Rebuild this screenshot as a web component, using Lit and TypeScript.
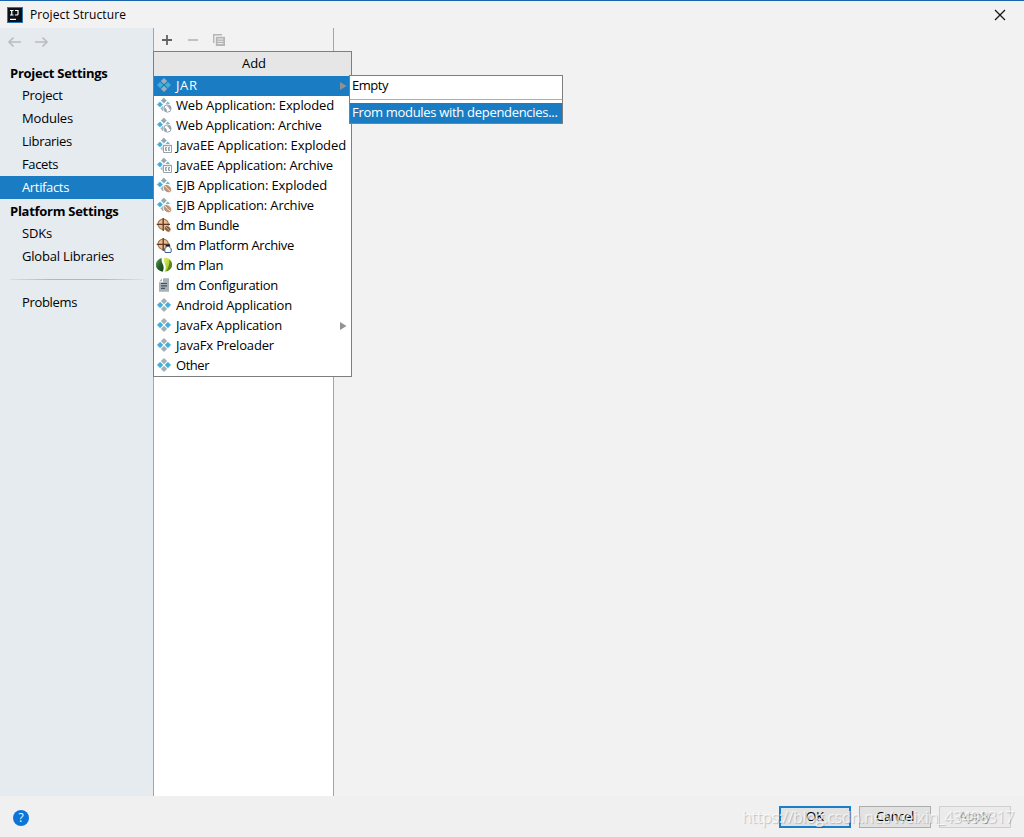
import { LitElement, html, css, svg, nothing } from "lit";
import { customElement, property } from "lit/decorators.js";

/** A single-line label whose tracking is adjusted to fill a given width. */
@customElement("fit-label")
class FitLabel extends LitElement {
  @property() text = "";
  @property({ type: Number }) width = 0;

  static styles = css`
    :host { display: inline-block; white-space: pre; }
    .text { display: inline-block; }
  `;

  updated() {
    const el = this.renderRoot.querySelector(".text") as HTMLElement;
    el.style.letterSpacing = "0px";
    const natural = el.getBoundingClientRect().width;
    if (this.width && this.text.length) {
      el.style.letterSpacing = `${(this.width - natural) / this.text.length}px`;
    }
  }

  render() {
    return html`<span class="text">${this.text}</span>`;
  }
}

const diamonds = svg`
  <g fill="#a3adb6" stroke="#a3adb6" stroke-width=".8" stroke-linejoin="round"><path d="M8 1.400 10.700 4.100 8 6.800 5.300 4.100z"/><path d="M8 9.200 10.700 11.900 8 14.600 5.300 11.900z"/></g>
  <g fill="#40b0d8" stroke="#40b0d8" stroke-width=".8" stroke-linejoin="round"><path d="M4.100 5.300 6.800 8 4.100 10.700 1.400 8z"/><path d="M11.900 5.300 14.600 8 11.900 10.700 9.200 8z"/></g>`;

const smallDiamonds = svg`
  <g stroke-width=".6" stroke-linejoin="round">
  <path d="M7.800 1 10.400 3.600 7.800 6.200 5.200 3.600z" fill="#98a5b0" stroke="#98a5b0"/>
  <path d="M3.900 4.900 6.500 7.500 3.900 10.100 1.300 7.500z" fill="#40b0d8" stroke="#40b0d8"/>
  <path d="M11.700 4.900 13.500 6.700H10z" fill="#40b0d8" stroke="#40b0d8"/>
  <path d="M7.200 9 7.200 14 4.900 11.500z" fill="#98a5b0" stroke="#98a5b0"/></g>`;

const wheel = svg`
  <circle cx="7.2" cy="7.3" r="5.2" fill="#e9bd91" stroke="#a4744c" stroke-width="1.1"/>
  <path d="M7.2 .9V14M.7 7.3H14" stroke="#5f3a22" stroke-width="1.3"/>`;

const icons: Record<string, unknown> = {
  artifact: diamonds,
  web: svg`${smallDiamonds}
    <circle cx="11.400" cy="11.500" r="4.700" fill="#fff"/>
    <circle cx="11.400" cy="11.500" r="3.700" fill="#fff" stroke="#98a3ad" stroke-width="1"/>
    <path d="M7.900 10 9.800 11.200 11 13 10.600 15 8.600 13.800zM11.500 7.900 11.300 9.400 12.600 10.500 13.400 12.300 15 12V10z" fill="#98a3ad"/>`,
  ee: svg`${smallDiamonds}
    <path d="M6.500 7H17v10H6.500z" fill="#fff"/>
    <path d="M7.500 8.500h8v7h-8z" fill="#fff" stroke="#98a3ad" stroke-width="1"/>
    <path d="M7 8.500h9" stroke="#98a3ad" stroke-width="1.400"/>
    <path d="M11 10.500H9.500V13.500H11M9.500 12H11M14 10.500H12.500V13.500H14M12.500 12H14" fill="none" stroke="#8b97a1" stroke-width=".9"/>`,
  ejb: svg`${smallDiamonds}
    <ellipse cx="11.4" cy="11.6" rx="4.8" ry="3.5" transform="rotate(43 11.4 11.6)" fill="#b99479" stroke="#fff" stroke-width=".8"/>
    <path d="M8.5 9.2C11 9.6 11.5 13.2 14.3 14" fill="none" stroke="#f2e5dc" stroke-width="1"/>`,
  bundle: svg`${wheel}
    <ellipse cx="11.6" cy="11.8" rx="3.6" ry="2.7" transform="rotate(43 11.6 11.8)" fill="#8c5934" stroke="#fff" stroke-width=".5"/>
    <path d="M9.8 10C11.5 10.5 11.6 12.8 13.6 13.5" fill="none" stroke="#dfb58f" stroke-width=".8"/>`,
  platform: svg`${wheel}
    <path d="M10 8.2h3.8v2.2l1.4 1.4v2.6a1.2 1.2 0 0 1-1.2 1.2h-4a1.2 1.2 0 0 1-1.2-1.2v-2.6L10 10.4z" fill="#fff" stroke="#2b4f86" stroke-width="1"/>
    <path d="M10.2 8.8h3.4" stroke="#111" stroke-width="1.6"/>`,
  plan: svg`
    <defs>
      <linearGradient id="leafA" x1="0" y1="0" x2="1" y2="1"><stop offset="0" stop-color="#6fae62"/><stop offset=".5" stop-color="#26632a"/><stop offset="1" stop-color="#123f19"/></linearGradient>
      <linearGradient id="leafB" x1="0" y1="0" x2="1" y2="1"><stop offset="0" stop-color="#e2f07a"/><stop offset=".5" stop-color="#b4d233"/><stop offset="1" stop-color="#6b951f"/></linearGradient>
    </defs>
    <path d="M5.800 1C2.200 1.800-.2 4.600-.2 7.800c0 3.400 2.700 6.200 6.900 6.900C8 12 8 9.400 6.600 6.800 5.500 4.800 5.300 3 5.800 1z" fill="url(#leafA)"/>
    <path d="M8.200 .6c4.600.2 7.900 3.200 7.900 6.900 0 3.800-3.100 6.800-7.500 7.200 1.300-2.600 1.500-5.200.3-7.800C7.900 4.700 7.600 2.700 8.200 .6z" fill="url(#leafB)"/>
    <path d="M13.200 2.800c1.700 1.200 2.800 2.800 2.800 4.700 0 3.200-2.300 5.900-5.700 6.800 2.300-3.700 3.500-7.600 2.900-11.500z" fill="#35701f" opacity=".7"/>`,
  config: svg`
    <path d="M7 1.300h6v13.400H3V5.300h4z" fill="#a7b0b8"/><path d="M6 1.500V4.300H3.200z" fill="#a7b0b8"/>
    <path d="M5 6.500h6M5 8.900h6M5 11.300h4" stroke="#48525b" stroke-width="1.200"/>`,
};

interface Entry { icon: string; label: string; width: number; sub?: boolean; active?: boolean; }

const entries: Entry[] = [
  { icon: "artifact", label: "JAR", width: 21.5, sub: true, active: true },
  { icon: "web", label: "Web Application: Exploded", width: 158 },
  { icon: "web", label: "Web Application: Archive", width: 145.5 },
  { icon: "ee", label: "JavaEE Application: Exploded", width: 170 },
  { icon: "ee", label: "JavaEE Application: Archive", width: 157 },
  { icon: "ejb", label: "EJB Application: Exploded", width: 151 },
  { icon: "ejb", label: "EJB Application: Archive", width: 138 },
  { icon: "bundle", label: "dm Bundle", width: 63 },
  { icon: "platform", label: "dm Platform Archive", width: 118 },
  { icon: "plan", label: "dm Plan", width: 47 },
  { icon: "config", label: "dm Configuration", width: 102 },
  { icon: "artifact", label: "Android Application", width: 116 },
  { icon: "artifact", label: "JavaFx Application", width: 106, sub: true },
  { icon: "artifact", label: "JavaFx Preloader", width: 98 },
  { icon: "artifact", label: "Other", width: 33 },
];

@customElement("app-root")
class AppRoot extends LitElement {
  static styles = css`
    :host {
      display: block; width: 1024px; height: 837px; overflow: hidden;
      font: 13px/20px "Open Sans", "Noto Sans", sans-serif; color: #000;
    }
    * { box-sizing: border-box; }
    svg { display: block; flex: none; }
    .window { height: 837px; display: flex; flex-direction: column; background: #f2f2f2; position: relative; }
    .title { height: 28px; flex: none; display: flex; align-items: center; border-top: 1px solid #1a65ab; padding: 1px 18px 0 7px; gap: 7px; font-size: 12px; }
    .title fit-label { flex: 1; }
    .title .close { margin-bottom: 1px; }
    .body { flex: 1; display: flex; min-height: 0; }
    .side { width: 153px; background: #e6ebf0; }
    .nav { height: 33px; padding: 7px 0 0 7px; display: flex; gap: 12px; }
    .heading { height: 23px; padding: 1px 0 0 10px; line-height: 23px; font-weight: 700; }
    .item { height: 23px; padding-left: 22px; line-height: 23px; }
    .item.on { background: #1a7dc4; color: #fff; }
    .rule { height: 23px; padding: 11px 8px 0 10px; }
    .rule i { display: block; height: 1px; background: linear-gradient(90deg, #d9dee2, #b3b8bc 30%, #b3b8bc 70%, #dfe4e8); }
    .list { width: 181px; border: solid #a5a5a5; border-width: 0 1px; background: #fff; }
    .tools { height: 24px; background: #f2f2f2; display: flex; padding: 5px 0 0 6px; gap: 12px; }
    .foot { height: 41px; flex: none; background: #f0f0f0; display: flex; align-items: flex-start; padding: 10px 13px 0; gap: 8px; }
    .help { margin: 4px auto 0 0; width: 16px; height: 16px; border-radius: 50%; background: #0b76d8; color: #fff; font-size: 12px; line-height: 16px; text-align: center; }
    .btn { width: 72px; height: 22px; border: 1px solid #adadad; background: #e2e2e2; line-height: 19px; text-align: center; }
    .btn.main { border: 2px solid #1a7fca; line-height: 17px; }
    .btn.off { border-color: #cfcfcf; background: #ebebeb; color: #a5a5a5; }
    .menu { position: absolute; left: 153px; top: 51px; width: 199px; border: 1px solid #7e7e7e; background: #fff; }
    .caption { height: 24px; background: #e6e6e6; text-align: center; line-height: 23px; padding-left: 3px; }
    .row { height: 20px; display: flex; align-items: center; gap: 4px; padding: 0 4px 2px 2px; line-height: 18px; }
    .row fit-label { flex: 1; }
    .row .arrow { margin-top: 2px; }
    .row.on, .pick.on { background: #1a7dc4; color: #fff; }
    .submenu { position: absolute; left: 349px; top: 75px; width: 214px; height: 49px; border: 1px solid #7e7e7e; background: #fff; }
    .pick { height: 20px; padding-left: 2px; line-height: 18px; }
    .gap { height: 7px; padding-top: 3px; }
    .gap i { display: block; height: 1px; background: #b0b2aa; }
    .mark { position: absolute; left: 742px; top: 806px; font: 16px/22px "Open Sans", sans-serif; color: rgba(255,255,255,.72); text-shadow: 1px 1px 1px rgba(0,0,0,.2); }
  `;

  private item(label: string, width: number, on = false) {
    return html`<div class="item ${on ? "on" : ""}"><fit-label .text=${label} .width=${width}></fit-label></div>`;
  }

  private row(e: Entry) {
    return html`<div class="row ${e.active ? "on" : ""}">
      <svg width="16" height="16" viewBox="0 0 16 16">${icons[e.icon]}</svg>
      <fit-label .text=${e.label} .width=${e.width}></fit-label>
      ${e.sub ? html`<svg class="arrow" width="7" height="8" viewBox="0 0 7 8"><path d="M0 0 6.500 4 0 8z" fill="#929292"/></svg>` : nothing}
    </div>`;
  }

  render() {
    return html`<div class="window">
      <div class="title">
        <svg width="16" height="16" viewBox="0 0 16 16">
          <path d="M0 0h16v16H0z" fill="#2d73ad"/><path d="M1 1h14v14H1z" fill="#0b1019"/>
          <path d="M3 3.500h3.500M4.750 3.500v4.500M3 8h3.500M8 3.500h3V7Q11 8 9.800 8H8" fill="none" stroke="#fff" stroke-width="1.200"/>
          <path d="M3 12.400h6" stroke="#fff" stroke-width="1.200"/>
        </svg>
        <fit-label .text=${"Project Structure"} .width=${96}></fit-label>
        <svg class="close" width="12" height="12" viewBox="0 0 12 12"><path d="M1 1 11 11M11 1 1 11" stroke="#111" stroke-width="1.200"/></svg>
      </div>
      <div class="body">
        <div class="side">
          <div class="nav">
            <svg width="15" height="14" viewBox="0 0 15 14"><path d="M14 7H2M6.500 2.500 2 7l4.500 4.500" fill="none" stroke="#bbbdbf" stroke-width="1.700"/></svg>
            <svg width="15" height="14" viewBox="0 0 15 14"><path d="M1 7h12M8.500 2.500 13 7l-4.500 4.500" fill="none" stroke="#bbbdbf" stroke-width="1.700"/></svg>
          </div>
          <div class="heading"><fit-label .text=${"Project Settings"} .width=${97.5}></fit-label></div>
          ${this.item("Project", 40.5)}${this.item("Modules", 51)}${this.item("Libraries", 50)}
          ${this.item("Facets", 36)}${this.item("Artifacts", 47, true)}
          <div class="heading"><fit-label .text=${"Platform Settings"} .width=${108.5}></fit-label></div>
          ${this.item("SDKs", 30)}${this.item("Global Libraries", 92)}
          <div class="rule"><i></i></div>
          ${this.item("Problems", 55)}
        </div>
        <div class="list">
          <div class="tools">
            <svg width="14" height="14" viewBox="0 0 14 14"><path d="M7 2v10M2 7h10" stroke="#626262" stroke-width="1.800"/></svg>
            <svg width="14" height="14" viewBox="0 0 14 14"><path d="M2 7h10" stroke="#bcbcbc" stroke-width="1.800"/></svg>
            <svg width="14" height="14" viewBox="0 0 14 14"><path d="M1.700 10V1.700H10" fill="none" stroke="#b5b5b5" stroke-width="1.400"/><path d="M3.800 3.800h9.200V13H3.800z" fill="#b5b5b5"/><path d="M5.500 6h5.800M5.500 8.300h5.800M5.500 10.600h5.800" stroke="#ededed" stroke-width="1"/></svg>
          </div>
        </div>
      </div>
      <div class="foot">
        <div class="help">?</div>
        <div class="btn main"><fit-label .text=${"OK"} .width=${18}></fit-label></div>
        <div class="btn"><fit-label .text=${"Cancel"} .width=${38}></fit-label></div>
        <div class="btn off"><fit-label .text=${"Apply"} .width=${32}></fit-label></div>
      </div>
      <div class="menu">
        <div class="caption"><fit-label .text=${"Add"} .width=${24}></fit-label></div>
        ${entries.map((e) => this.row(e))}
      </div>
      <div class="submenu">
        <div class="pick"><fit-label .text=${"Empty"} .width=${36}></fit-label></div>
        <div class="gap"><i></i></div>
        <div class="pick on"><fit-label .text=${"From modules with dependencies..."} .width=${205.5}></fit-label></div>
      </div>
      <div class="mark"><fit-label .text=${"https://blog.csdn.net/weixin_43498317"} .width=${272}></fit-label></div>
    </div>`;
  }
}
